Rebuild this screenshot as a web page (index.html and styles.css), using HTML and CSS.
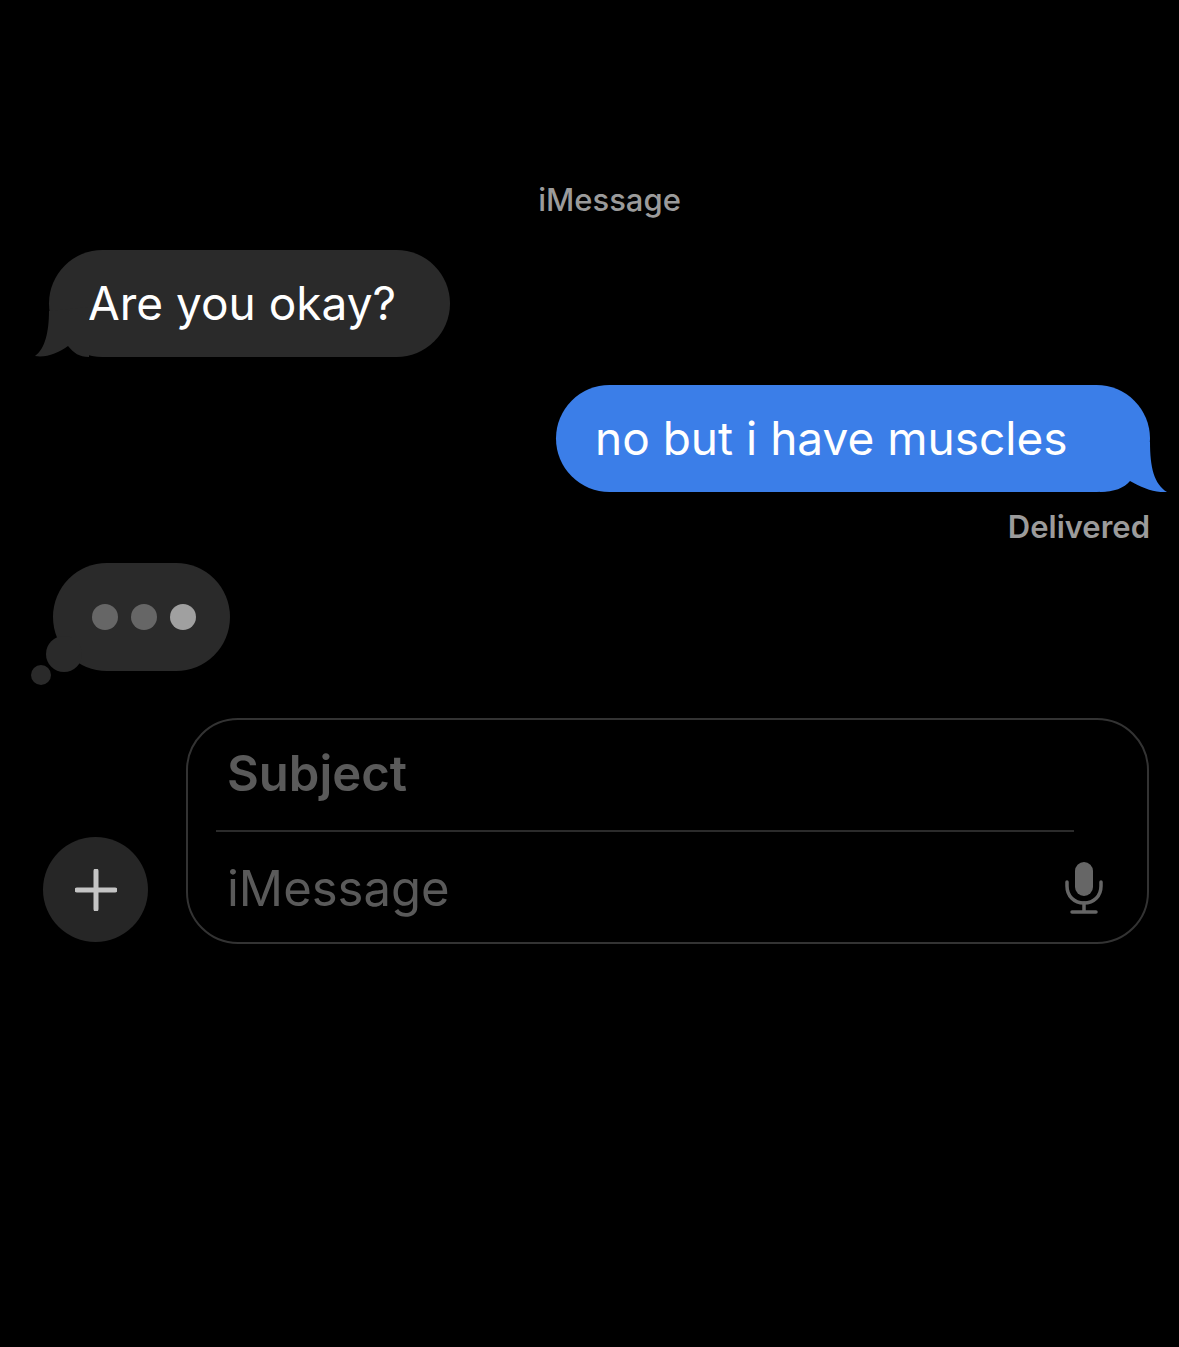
FILE: index.html
```html
<!DOCTYPE html>
<html lang="en">
<head>
  <meta charset="UTF-8">
  <title>iMessage</title>
  <link rel="stylesheet" href="styles.css">
</head>
<body>

  <div class="thread">
    <div class="service">iMessage</div>

    <div class="bubble incoming">
      <svg class="tail tail-in" width="56" height="50" viewBox="0 0 56 50"><path d="M15 4C15 25 11 42 1 49C12 51 24 46 34 39C40 46 45 50 55 50L55 0Z"/></svg>
      Are you okay?
    </div>

    <div class="bubble outgoing">
      <svg class="tail tail-out" width="68" height="50" viewBox="0 0 68 50"><path d="M50 0C50 25 54 42 67 50C55 51 42 46 30 39C24 46 14 50 0 50L0 0Z"/></svg>
      no but i have muscles
    </div>
    <div class="status">Delivered</div>

    <div class="typing">
      <span class="dot dot-dim"></span>
      <span class="dot dot-dim"></span>
      <span class="dot dot-lit"></span>
      <span class="puff puff-big"></span>
      <span class="puff puff-small"></span>
    </div>
  </div>

  <div class="compose">
    <div class="plus">
      <svg width="42" height="42" viewBox="0 0 42 42"><path d="M21 2V40M2 21H40" stroke="#c4c4c4" stroke-width="5" stroke-linecap="round"/></svg>
    </div>
    <div class="field">
      <div class="subject">Subject</div>
      <div class="divider"></div>
      <div class="message">
        <span>iMessage</span>
        <svg class="mic" width="38" height="54" viewBox="0 0 38 54">
          <rect x="10" y="1" width="18" height="34" rx="9" fill="#666"/>
          <path d="M2 21V25C2 35 9 42 19 42C29 42 36 35 36 25V21" fill="none" stroke="#666" stroke-width="3.5" stroke-linecap="round"/>
          <path d="M19 42V50M7 51H31" fill="none" stroke="#666" stroke-width="3.5" stroke-linecap="round"/>
        </svg>
      </div>
    </div>
  </div>

</body>
</html>
```

FILE: styles.css
```css
* {
  margin: 0;
  padding: 0;
  box-sizing: border-box;
}

html, body {
  height: 100%;
  background: #000;
  font-family: Inter, 'Liberation Sans', sans-serif;
}

body {
  padding-top: 180px;
  overflow: hidden;
}

.thread {
  display: flex;
  flex-direction: column;
  align-items: flex-start;
  padding: 0 29px 0 49px;
}

.service {
  align-self: center;
  margin-left: 20px;
  height: 40px;
  line-height: 40px;
  font-size: 31px;
  font-weight: 500;
  color: #9b9b9b;
}

.bubble {
  position: relative;
  height: 107px;
  border-radius: 54px;
  line-height: 107px;
  font-size: 46px;
  color: #fff;
  white-space: nowrap;
}

.tail {
  position: absolute;
  bottom: 0;
}

.incoming {
  width: 401px;
  margin-top: 30px;
  padding-left: 39px;
  background: #2a2a2a;
}

.tail-in {
  left: -15px;
  fill: #2a2a2a;
}

.outgoing {
  align-self: flex-end;
  width: 594px;
  margin-top: 28px;
  padding-left: 39px;
  background: #3b7ee8;
}

.tail-out {
  right: -18px;
  fill: #3b7ee8;
}

.status {
  align-self: flex-end;
  height: 40px;
  margin-top: 15px;
  line-height: 40px;
  font-size: 31px;
  font-weight: 600;
  color: #9b9b9b;
}

.typing {
  position: relative;
  display: flex;
  align-items: center;
  gap: 13px;
  width: 177px;
  height: 108px;
  margin: 16px 0 0 4px;
  padding-left: 39px;
  border-radius: 54px;
  background: #2a2a2a;
}

.dot {
  width: 26px;
  height: 26px;
  border-radius: 50%;
}

.dot-dim {
  background: #666;
}

.dot-lit {
  background: #a0a0a0;
}

.puff {
  position: absolute;
  border-radius: 50%;
  background: #2a2a2a;
}

.puff-big {
  left: -7px;
  top: 73px;
  width: 36px;
  height: 36px;
}

.puff-small {
  left: -22px;
  top: 102px;
  width: 20px;
  height: 20px;
}

.compose {
  display: flex;
  align-items: flex-end;
  gap: 38px;
  margin-top: 47px;
  padding: 0 30px 0 43px;
}

.plus {
  display: flex;
  align-items: center;
  justify-content: center;
  flex: none;
  width: 105px;
  height: 105px;
  margin-bottom: 2px;
  border-radius: 50%;
  background: #262626;
}

.field {
  flex: 1;
  height: 226px;
  padding: 0 0 0 28px;
  border: 2px solid #333;
  border-radius: 52px;
}

.subject {
  height: 110px;
  padding-left: 11px;
  line-height: 108px;
  font-size: 49px;
  font-weight: 600;
  color: #5a5a5a;
}

.divider {
  width: 858px;
  height: 2px;
  background: #2b2b2b;
}

.message {
  display: flex;
  align-items: center;
  justify-content: space-between;
  height: 112px;
  padding: 0 44px 0 11px;
  font-size: 49px;
  color: #5a5a5a;
}
```
